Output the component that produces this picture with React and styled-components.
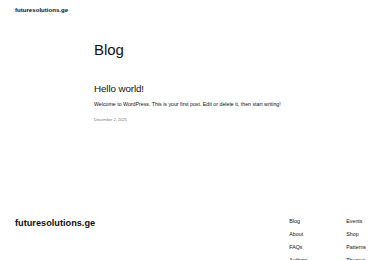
import React from "react";
import styled, { createGlobalStyle } from "styled-components";

const Global = createGlobalStyle`
  html, body { margin: 0; padding: 0; background: #fff; }
  body { font-family: "Liberation Sans", Arial, sans-serif; color: #111; }
`;

const Page = styled.div`
  width: 380px;
  display: flex;
  flex-direction: column;
`;

const Header = styled.header`
  padding: 6px 15px 0;
`;

const Brand = styled.div`
  font-size: ${(p) => p.$size}px;
  font-weight: 700;
  line-height: 1.15;
  color: #111;
`;

const Main = styled.main`
  width: 192px;
  margin: 0 auto;
  padding-top: 28px;
  display: flex;
  flex-direction: column;
`;

const PageTitle = styled.h1`
  margin: 0;
  font-size: 15px;
  font-weight: 400;
  line-height: 1.15;
  letter-spacing: -0.1px;
`;

const PostTitle = styled.h2`
  margin: 25px 0 0;
  font-size: 9.8px;
  font-weight: 400;
  line-height: 1.15;
  letter-spacing: -0.1px;
`;

const Excerpt = styled.p`
  margin: 6px 0 0;
  font-size: 5.25px;
  line-height: 1.15;
  white-space: nowrap;
`;

const PostDate = styled.div`
  margin-top: 11px;
  font-size: 4px;
  line-height: 1.15;
  color: #777;
`;

const Footer = styled.footer`
  margin-top: 93px;
  padding: 0 14px 0 15px;
  display: flex;
  justify-content: space-between;
  align-items: flex-start;
`;

const FooterBrand = styled(Brand)`
  margin-top: 3px;
`;

const Nav = styled.nav`
  display: grid;
  grid-template-columns: 57px auto;
`;

const NavColumn = styled.div`
  display: flex;
  flex-direction: column;
`;

const NavLink = styled.span`
  font-size: 5.3px;
  line-height: 12.8px;
  color: #111;
`;

export default function App() {
  const col1 = ["Blog", "About", "FAQs", "Authors"];
  const col2 = ["Events", "Shop", "Patterns", "Themes"];
  return (
    <>
      <Global />
      <Page>
        <Header>
          <Brand $size={6.1}>futuresolutions.ge</Brand>
        </Header>
        <Main>
          <PageTitle>Blog</PageTitle>
          <PostTitle>Hello world!</PostTitle>
          <Excerpt>
            Welcome to WordPress. This is your first post. Edit or delete it, then start writing!
          </Excerpt>
          <PostDate>December 2, 2025</PostDate>
        </Main>
        <Footer>
          <FooterBrand $size={9.2}>futuresolutions.ge</FooterBrand>
          <Nav>
            <NavColumn>
              {col1.map((l) => (
                <NavLink key={l}>{l}</NavLink>
              ))}
            </NavColumn>
            <NavColumn>
              {col2.map((l) => (
                <NavLink key={l}>{l}</NavLink>
              ))}
            </NavColumn>
          </Nav>
        </Footer>
      </Page>
    </>
  );
}
